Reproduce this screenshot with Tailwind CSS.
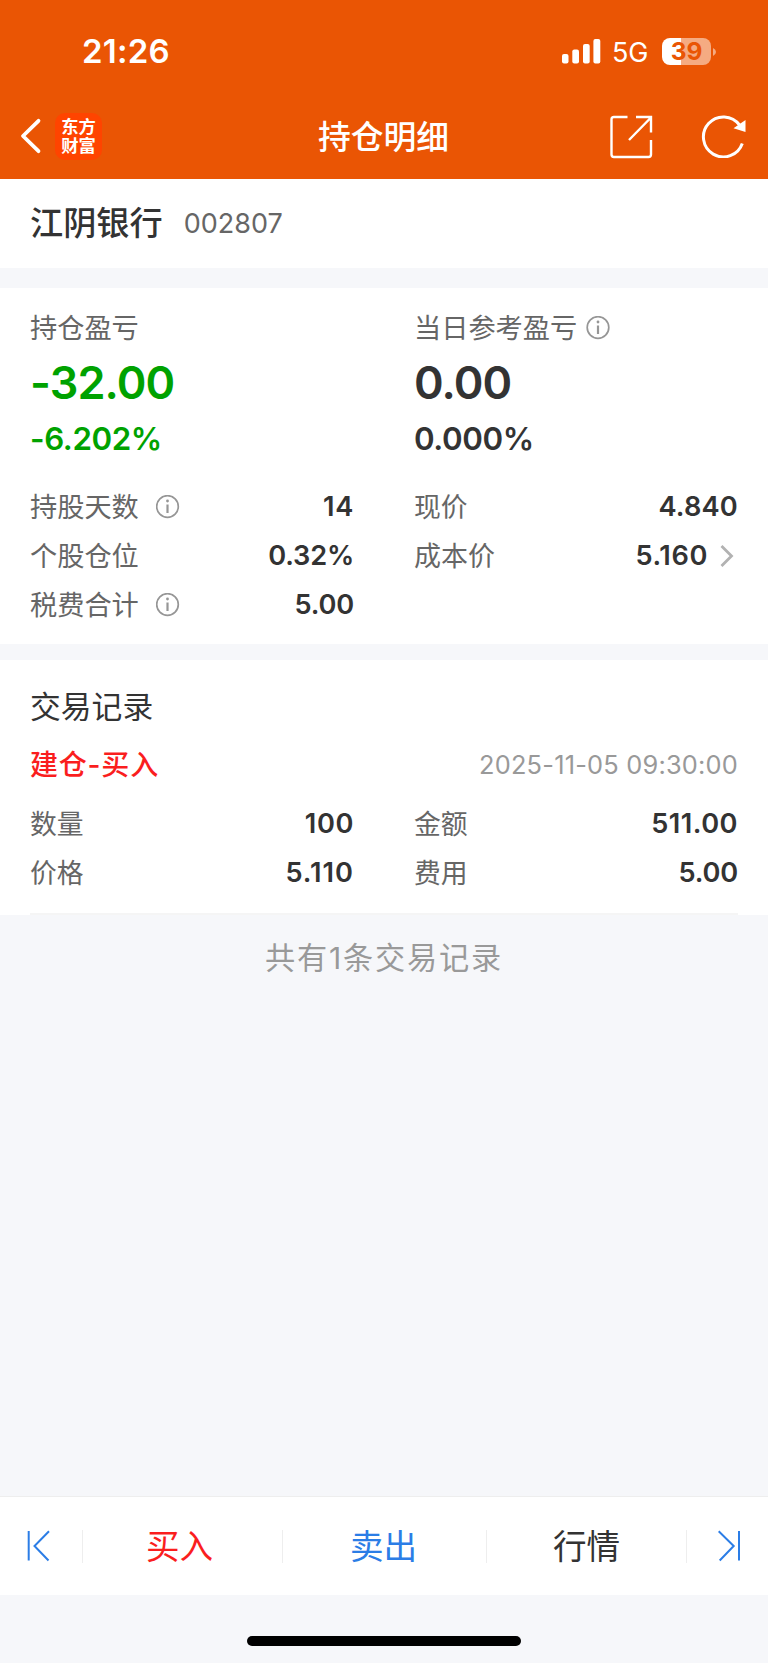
<!DOCTYPE html>
<html lang="zh-CN">
<head>
    <meta charset="UTF-8">
    <meta name="viewport" content="width=device-width, initial-scale=1.0">
    <title>持仓明细</title>
    <script src="https://cdn.jsdelivr.net/npm/@tailwindcss/browser@4"></script>
</head>
<body class="bg-[#f6f7fa] text-[#333333] font-['Inter','Noto_Sans_CJK_SC',sans-serif] leading-none">
    <div class="flex flex-col w-[768px] h-[1663px] overflow-hidden">
        <!-- 顶部栏 -->
        <header class="bg-[#ea5504] text-white h-[179px] shrink-0">
            <!-- 状态栏 -->
            <div class="flex items-center justify-between h-[93px] pt-[10px] pl-[82px] pr-[52px]">
                <span class="text-[33px] tracking-[0.2px] font-semibold">21:26</span>
                <div class="flex items-center">
                    <svg class="w-[39px] h-[25px]" viewBox="0 0 39 25" fill="currentColor">
                        <rect x="0" y="15" width="6.5" height="9.5" rx="2"/>
                        <rect x="10.3" y="10.5" width="6.7" height="14" rx="2"/>
                        <rect x="21" y="5" width="6.7" height="19.5" rx="2"/>
                        <rect x="31.4" y="0" width="6.9" height="24.5" rx="2"/>
                    </svg>
                    <span class="ml-[11px] w-[37px] pt-[2px] text-[27px] tracking-[-0.2px]">5G</span>
                    <div class="ml-[13px] flex items-center">
                        <div class="flex items-center justify-center w-[49px] h-[27px] rounded-[8px] bg-linear-to-r from-white from-39% to-[#f5ab82] to-39%">
                            <span class="text-[24.5px] font-bold text-[#ea5504]">39</span>
                        </div>
                        <svg class="ml-[2px] w-[3px] h-[8px]" viewBox="0 0 3 8"><path d="M0 0Q3 1.5 3 4T0 8Z" fill="#f5ab82"/></svg>
                    </div>
                </div>
            </div>
            <!-- 导航栏 -->
            <div class="grid grid-cols-3 items-center h-[86px] pl-[20px] pr-[21px]">
                <div class="flex items-center">
                    <svg class="w-[22px] h-[36px]" viewBox="0 0 22 36" fill="none" stroke="currentColor" stroke-width="3.8" stroke-linecap="round" stroke-linejoin="round">
                        <path d="M18.5 2.8L3 18L18.5 33.2"/>
                    </svg>
                    <div class="ml-[13px] w-[47px] h-[47px] rounded-[10px] bg-[#ff4400] flex flex-col items-center justify-center text-[17.3px] leading-[19.5px] font-bold">
                        <span>东方</span>
                        <span>财富</span>
                    </div>
                </div>
                <h1 class="text-center text-[32.8px] pt-[2px] font-medium">持仓明细</h1>
                <div class="flex items-center justify-end gap-[48px]">
                    <svg class="w-[44px] h-[44px] mt-[2px]" viewBox="0 0 44 44" fill="none" stroke="currentColor" stroke-width="2.4">
                        <path d="M18.500 2H5Q2.500 2 2.500 4.500V39.500Q2.500 42 5 42H39.500Q42 42 42 39.500V25M27 2H42V17.500M20 25L42 2.500"/>
                    </svg>
                    <svg class="w-[46px] h-[44px]" viewBox="0 0 46 44" fill="none" stroke="currentColor" stroke-width="3">
                        <path d="M41.300 29.500A20 20 0 1 1 38.500 11"/>
                        <path d="M44.500 6V18L32.500 14.200Z" fill="currentColor" stroke="none"/>
                    </svg>
                </div>
            </div>
        </header>

        <!-- 股票名称 -->
        <section class="bg-white h-[89px] shrink-0 flex items-center px-[30px]">
            <h2 class="text-[33.2px] font-medium">江阴银行</h2>
            <span class="ml-[21px] text-[27px] text-[#666666]">002807</span>
        </section>

        <!-- 持仓盈亏 -->
        <section class="bg-white mt-[20px] h-[356px] shrink-0 px-[30px] pt-[16px]">
            <div class="grid grid-cols-2 gap-x-[60px]">
                <div class="text-[#00a200]">
                    <div class="h-[48px] pt-[2px] flex items-center text-[27.2px] text-[#666666]">持仓盈亏</div>
                    <div class="h-[60px] flex items-center text-[45px] tracking-[-0.9px] font-semibold">-32.00</div>
                    <div class="h-[55px] pt-[1px] flex items-center text-[31.3px] tracking-[-0.4px] font-semibold">-6.202%</div>
                </div>
                <div>
                    <div class="h-[48px] flex items-center text-[27.2px] text-[#666666]">
                        <span class="pt-[2px]">当日参考盈亏</span>
                        <svg class="ml-[9px] w-[24px] h-[24px]" viewBox="0 0 24 24" fill="none" stroke="#969696" stroke-width="1.7">
                            <circle cx="12" cy="11.500" r="10.800"/><path d="M12 9.500V18" stroke-width="2.200"/><circle cx="12" cy="6" r="1.400" fill="#969696" stroke="none"/>
                        </svg>
                    </div>
                    <div class="h-[60px] flex items-center text-[45px] tracking-[-0.9px] font-semibold">0.00</div>
                    <div class="h-[55px] pt-[1px] flex items-center text-[31.3px] tracking-[-0.4px] font-semibold">0.000%</div>
                </div>
            </div>
            <div class="grid grid-cols-2 gap-x-[60px] mt-[15px] text-[27.2px]">
                <div class="h-[49px] flex items-center">
                    <span class="text-[#666666] pt-[2px]">持股天数</span>
                    <svg class="ml-[17px] w-[24px] h-[24px]" viewBox="0 0 24 24" fill="none" stroke="#969696" stroke-width="1.7">
                        <circle cx="11.500" cy="11.500" r="10.800"/><path d="M11.500 9.500V18" stroke-width="2.200"/><circle cx="11.500" cy="6" r="1.400" fill="#969696" stroke="none"/>
                    </svg>
                    <span class="ml-auto font-semibold tracking-[0.7px]">14</span>
                </div>
                <div class="h-[49px] flex items-center justify-between">
                    <span class="text-[#666666] text-[26.8px] pt-[2px]">现价</span>
                    <span class="font-semibold tracking-[0.2px]">4.840</span>
                </div>
                <div class="h-[49px] flex items-center justify-between">
                    <span class="text-[#666666] pt-[2px]">个股仓位</span>
                    <span class="font-semibold tracking-[-0.2px]">0.32%</span>
                </div>
                <div class="h-[49px] flex items-center">
                    <span class="text-[#666666] text-[27px] pt-[2px]">成本价</span>
                    <span class="ml-auto font-semibold tracking-[0.6px]">5.160</span>
                    <svg class="ml-[12px] mr-[4px] w-[14px] h-[24px]" viewBox="0 0 14 24" fill="none" stroke="#b2b2b2" stroke-width="2.8">
                        <path d="M1.500 2L11.500 12L1.500 22"/>
                    </svg>
                </div>
                <div class="h-[49px] flex items-center">
                    <span class="text-[#666666] pt-[2px]">税费合计</span>
                    <svg class="ml-[17px] w-[24px] h-[24px]" viewBox="0 0 24 24" fill="none" stroke="#969696" stroke-width="1.7">
                        <circle cx="11.500" cy="11.500" r="10.800"/><path d="M11.500 9.500V18" stroke-width="2.200"/><circle cx="11.500" cy="6" r="1.400" fill="#969696" stroke="none"/>
                    </svg>
                    <span class="ml-auto font-semibold tracking-[-0.2px]">5.00</span>
                </div>
            </div>
        </section>

        <!-- 交易记录 -->
        <section class="bg-white mt-[16px] h-[255px] shrink-0 px-[30px] pt-[16px] flex flex-col">
            <h3 class="h-[60px] pt-[2px] flex items-center text-[30.8px]">交易记录</h3>
            <div class="h-[57px] flex items-center justify-between">
                <span class="text-[28px] tracking-[0.8px] font-medium text-[#fa1e1e]">建仓-买入</span>
                <span class="text-[25.4px] tracking-[0.2px] text-[#999999]">2025-11-05 09:30:00</span>
            </div>
            <div class="grid grid-cols-2 gap-x-[60px] mt-[6px] text-[27.2px]">
                <div class="h-[49px] flex items-center justify-between">
                    <span class="text-[#666666] text-[26.8px] pt-[2px]">数量</span>
                    <span class="font-semibold tracking-[0.6px]">100</span>
                </div>
                <div class="h-[49px] flex items-center justify-between">
                    <span class="text-[#666666] text-[26.8px] pt-[2px]">金额</span>
                    <span class="font-semibold tracking-[0.5px]">511.00</span>
                </div>
                <div class="h-[49px] flex items-center justify-between">
                    <span class="text-[#666666] text-[26.8px] pt-[2px]">价格</span>
                    <span class="font-semibold tracking-[1px]">5.110</span>
                </div>
                <div class="h-[49px] flex items-center justify-between">
                    <span class="text-[#666666] text-[26.8px] pt-[2px]">费用</span>
                    <span class="font-semibold tracking-[-0.2px]">5.00</span>
                </div>
            </div>
            <div class="mt-auto h-[2px] bg-[#f5f5f5]"></div>
        </section>
        <p class="h-[84px] pt-[2px] flex items-center justify-center text-[30.2px] tracking-[1.8px] text-[#999999]">共有1条交易记录</p>

        <!-- 底部操作栏 -->
        <nav class="mt-auto h-[99px] shrink-0 bg-white border-t border-[#eeeeee] flex items-center text-[33.6px]">
            <button class="w-[81px] flex items-center pl-[26px]">
                <svg class="w-[26px] h-[32px]" viewBox="0 0 26 32" fill="none" stroke="#2b7de6" stroke-width="2">
                    <path d="M2.700 1V30.500M23 1.300L8.500 16L22.500 30.500"/>
                </svg>
            </button>
            <div class="w-px h-[33px] ml-[1px] bg-[#eeeeee]"></div>
            <button class="w-[199px] text-[#fa1e1e] pt-[2px] pr-[6px]">买入</button>
            <div class="w-px h-[33px] bg-[#eeeeee]"></div>
            <button class="w-[203px] text-[#2b7de6] pt-[2px] pr-[2px]">卖出</button>
            <div class="w-px h-[33px] bg-[#eeeeee]"></div>
            <button class="w-[199px] pt-[2px]">行情</button>
            <div class="w-px h-[33px] bg-[#eeeeee]"></div>
            <button class="flex-1 flex items-center justify-end pr-[25px]">
                <svg class="w-[26px] h-[32px]" viewBox="0 0 26 32" fill="none" stroke="#2b7de6" stroke-width="2">
                    <path d="M22 1V30.500M1.700 1.300L16.700 16L2.700 30.500"/>
                </svg>
            </button>
        </nav>
        <div class="h-[68px] shrink-0 flex justify-center pt-[41px]">
            <div class="w-[274px] h-[10px] rounded-full bg-black"></div>
        </div>
    </div>
</body>
</html>
